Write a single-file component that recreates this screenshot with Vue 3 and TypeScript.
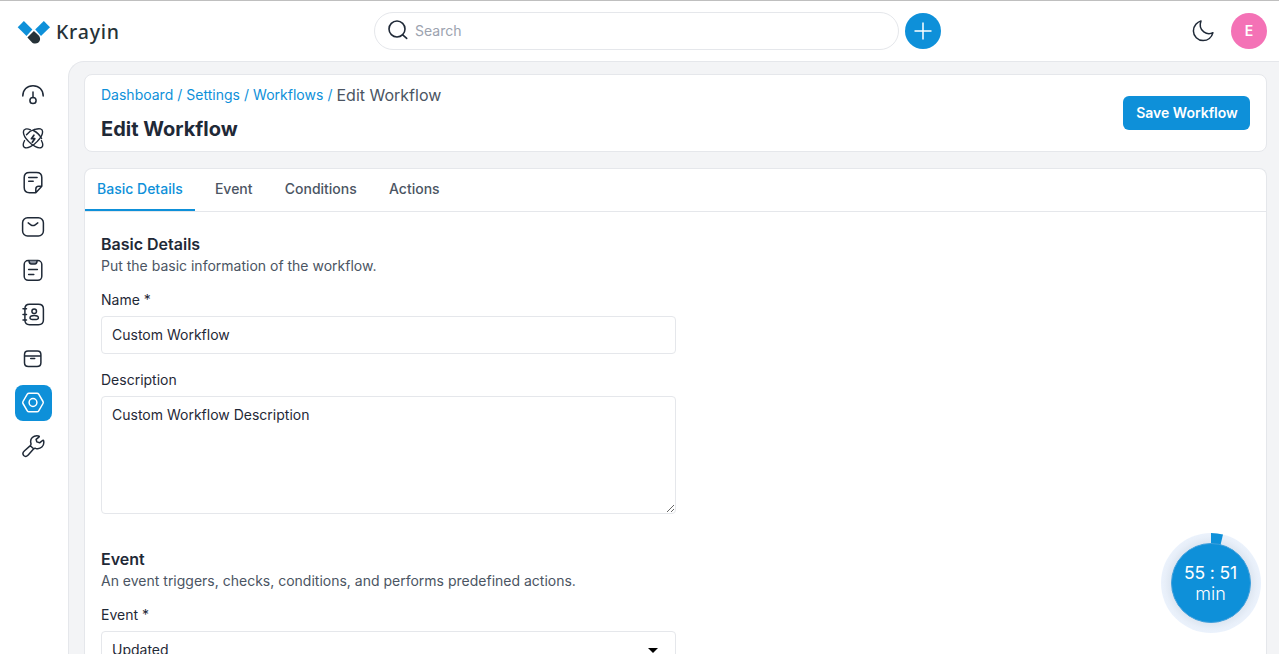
<script setup lang="ts">
import { ref } from 'vue'

interface Crumb { label: string }

const crumbs: Crumb[] = [{ label: 'Dashboard' }, { label: 'Settings' }, { label: 'Workflows' }]
const tabs: string[] = ['Basic Details', 'Event', 'Conditions', 'Actions']
const activeTab = ref<string>('Basic Details')
const name = ref<string>('Custom Workflow')
const description = ref<string>('Custom Workflow Description')
</script>

<template>
  <div class="app">
    <header class="header">
      <div class="brand">
        <svg class="logo" viewBox="0 0 110 34" width="110" height="34">
          <path d="M5.900 7 14.400 15.400 8.500 21.900-.3 13.200Z" fill="#0e90d9" />
          <path d="M25.800 7 32 13.200 23 21.900 17.200 15.400Z" fill="#0e90d9" />
          <path d="M15.900 17 21 21.700C23.300 24.500 22 29.500 17.300 29.500 15.500 29.500 14.500 29 13.600 28L9.400 23.400Z" fill="#263238" />
          <text x="38" y="25" textLength="63" lengthAdjust="spacing">Krayin</text>
        </svg>
      </div>
      <div class="search-row">
        <label class="search">
          <svg viewBox="0 0 24 24" width="24" height="24" class="line">
            <circle cx="11" cy="10" r="8" /><path d="m16.700 15.800 4 3.600" />
          </svg>
          <input type="text" placeholder="Search" />
        </label>
        <button class="add" aria-label="Add">
          <svg viewBox="0 0 36 36" width="36" height="36"><path d="M18 9.5v17M9.5 18h17" fill="none" stroke="#fff" stroke-width="1.5" /></svg>
        </button>
      </div>
      <div class="account">
        <svg class="line" viewBox="0 0 24 24" width="24" height="24">
          <path d="M10 1.900C6.500 3 2.400 6.600 2.400 12a9.700 9.700 0 0 0 9.700 9.600c4.800 0 8.600-3.300 9.800-7.900-2.200 1.100-6.200 1.300-9.100-.9-3.500-2.700-4.300-7-2.800-10.900Z" />
        </svg>
        <span class="avatar">E</span>
      </div>
    </header>

    <div class="body">
      <nav class="sidebar">
        <a><svg class="line" viewBox="0 0.500 24 24" width="24" height="24">
          <path d="M1.800 13.600C1.800 7 6 3.200 12 3.200s10.200 3.800 10.200 10.400" /><circle cx="12" cy="18" r="3.100" /><path d="M12 9.500V15" />
        </svg></a>
        <a><svg class="line" viewBox="0 0.500 24 24" width="24" height="24">
          <g stroke-width="1.400">
            <path d="M9.500 3.300C5.500 1.600 2.400 2.400 2.400 5.500c0 2.500 1.800 6 4.800 9.100 4.500 4.900 10.500 8 13.400 6.200 1.600-1.100 1.400-3.700-.2-6.800" />
            <path d="M14 2.900c4.500-1.400 7.600-.7 7.600 2.400 0 2.500-1.800 6-5 9.300-4.500 4.900-10.300 8-13.200 6.200C1.800 19.700 2 17.100 3.600 14" />
            <path d="M5.500 8.200C7.800 5.600 10.700 3.700 13.600 2.900M12.500 4c3 1.500 6.300 4.600 8.100 8" />
          </g>
          <path d="M8 10.500 12 6.800l4.200 4.300-4.200 5.200-4.200-4Z" fill="#fff" stroke="none" />
          <path d="m12.900 8.700-2.500 3.500h3.400l-2.500 3.600" stroke-width="1.700" />
        </svg></a>
        <a><svg class="line" viewBox="0 0.500 24 24" width="24" height="24">
          <path d="M14.800 22.200H8.500C5 22.200 3.200 20.500 3.200 17V7c0-3.600 1.700-5 5.300-5h7c3.600 0 5.300 1.500 5.300 5v8.800l-6 6.400v-3.500c0-2 .8-2.900 2.800-2.900h3.200M7.700 7h8.400M7.700 10.800h4.500" />
        </svg></a>
        <a><svg class="line" viewBox="0 0.300 24 24" width="24" height="24">
          <rect x="1.600" y="3" width="20.800" height="18.200" rx="5" /><path d="m7.200 8.200 2.600 1.900c1.400 1 3 1 4.400 0l2.600-1.900" />
        </svg></a>
        <a><svg class="line" viewBox="0 0.300 24 24" width="24" height="24">
          <rect x="3.200" y="1.800" width="17.600" height="19.800" rx="4" /><path d="M8 2c.1 2.600.8 3.200 2.400 3.200h3.400c1.500 0 2.200-.8 2.300-3.200" fill="#8b93a0" /><path d="M7.600 10.900h8.800M7.600 15.900h5.200" />
        </svg></a>
        <a><svg class="line" viewBox="0 0.500 24 24" width="24" height="24">
          <path d="M8.500 1.700h8.900c3.200 0 5 1.700 5 4.700v11.100c0 3-1.800 4.700-5 4.700H8.500c-3 0-4.600-1.600-4.600-4.700V6.400c0-3 1.600-4.700 4.600-4.700ZM2 6.300h3.500M2 11.900h3.500M2 17.600h3.500" /><circle cx="13.200" cy="8.800" r="2.300" /><path d="M13.200 13.100c-2.700 0-4.200 1-4.200 2.300s1 1.600 4.200 1.600 4.200-.4 4.200-1.600-1.500-2.300-4.200-2.300Z" />
        </svg></a>
        <a><svg class="line" viewBox="0.300 0.300 24 24" width="24" height="24">
          <path d="M7.300 4.400h9.400c2.400 0 3.500 1.300 3.500 3.700v8c0 2.600-1.200 3.800-3.900 3.800H7.700c-2.600 0-3.900-1.200-3.900-3.800v-8c0-2.400 1.200-3.700 3.500-3.700ZM3.900 9.200h16.200M10 11.800h4" />
        </svg></a>
        <a class="current"><svg class="line" viewBox="0 0.500 24 24" width="24" height="24">
          <path d="M8 2.700h8c.9 0 1.300.3 1.700 1l4.300 7.300c.4.700.4 1.300 0 2l-4.300 7.300c-.4.700-.8 1-1.700 1H8c-.9 0-1.300-.3-1.700-1L2 13c-.4-.7-.4-1.300 0-2l4.300-7.300c.4-.7.8-1 1.700-1Z" /><circle cx="12" cy="12" r="3.900" />
        </svg></a>
        <a><svg class="line wrench" viewBox="-0.500 0.300 24 24" width="24" height="24">
          <path d="M16.900 2.200c-5-.8-8.800 2.700-7.500 7.400.3 1 .2 1.500-.6 2.300l-6 5.400c-1.600 1.500-1.700 3.200-.6 4.500 1.300 1.300 3.100 1.200 4.500-.4l5.300-6c.8-.9 1.300-1 2.300-.7 4.800 1.200 8.700-2.300 7.900-7.400-.1-.9-.7-1-1.300-.4l-2.800 2.200-2.700-.9-.8-2.500 2.800-2.200c.7-.6.500-1.100-.5-1.300ZM8.800 12l3.300 3" />
        </svg></a>
      </nav>

      <main class="main">
        <section class="title-card">
          <div>
            <div class="crumbs">
              <span v-for="crumb in crumbs" :key="crumb.label" class="crumb"><a>{{ crumb.label }}</a><i>/</i></span>
              <span class="here">Edit Workflow</span>
            </div>
            <h1>Edit Workflow</h1>
          </div>
          <button class="save">Save Workflow</button>
        </section>

        <section class="form-card">
          <div class="tabs">
            <button v-for="tab in tabs" :key="tab" class="tab" :class="{ active: tab === activeTab }" @click="activeTab = tab">{{ tab }}</button>
          </div>
          <div class="form">
            <h2>Basic Details</h2>
            <p>Put the basic information of the workflow.</p>
            <label class="field">
              <span>Name *</span>
              <input v-model="name" type="text" />
            </label>
            <label class="field second">
              <span>Description</span>
              <textarea v-model="description" spellcheck="false"></textarea>
            </label>
            <h2 class="next">Event</h2>
            <p>An event triggers, checks, conditions, and performs predefined actions.</p>
            <div class="field">
              <span>Event *</span>
              <div class="select">Updated<svg viewBox="0 0 10 5" width="10" height="5"><path d="M0 0h10L5 5Z" /></svg></div>
            </div>
          </div>
        </section>
      </main>
    </div>

    <div class="timer">
      <svg viewBox="0 0 100 100" width="100" height="100">
        <defs>
          <radialGradient id="timer-halo">
            <stop offset=".78" stop-color="#dce5f0" />
            <stop offset=".92" stop-color="#e8eff9" />
            <stop offset="1" stop-color="#ebf2fc" />
          </radialGradient>
        </defs>
        <circle cx="50" cy="50" r="50" fill="url(#timer-halo)" />
        <path d="M50 0a50 50 0 0 1 12 1.500L59.500 12H50Z" fill="#0e90d9" />
        <circle cx="50" cy="50" r="39.500" fill="#0e90d9" stroke="#3f9fdc" stroke-width="1" />
      </svg>
      <div class="time"><b>55 : 51</b><span>min</span></div>
    </div>
  </div>
</template>

<style>
body { margin: 0; overflow: hidden; }
</style>

<style scoped>
* { box-sizing: border-box; }
.app { position: relative; display: flex; flex-direction: column; height: 654px; overflow: hidden; background: #fff; border-top: 1px solid #bfbfbf; color: #1f2937; font-family: Inter, sans-serif; font-size: 14px; line-height: 20px; }
button, input, textarea { font: inherit; color: inherit; }
button { border: 0; padding: 0; }
svg { display: block; flex: none; }
.line { fill: none; stroke: #1f2937; stroke-width: 1.5; stroke-linecap: round; stroke-linejoin: round; }
.header { display: flex; align-items: center; height: 60px; flex: none; padding: 0 12px 0 18px; }
.brand { width: 356px; }
.logo { overflow: visible; }
.logo text { font-family: "Noto Sans", sans-serif; font-size: 19.5px; font-weight: 500; fill: #263238; }
.search-row { display: flex; align-items: center; gap: 6px; }
.search { display: flex; align-items: center; width: 525px; height: 38px; border: 1px solid #e5e7eb; border-radius: 19px; padding-left: 11px; gap: 5px; }
.search .line { stroke-width: 1.6; }
.search input { width: 400px; border: 0; outline: 0; padding: 0; background: transparent; }
.search input::placeholder { color: #9ca3af; opacity: 1; }
.add { width: 36px; height: 36px; border-radius: 50%; background: #0e90d9; }
.account { display: flex; align-items: center; gap: 16px; margin-left: auto; }
.avatar { width: 36px; height: 36px; border-radius: 50%; background: #f472b6; color: #fff; font-weight: 600; line-height: 36px; text-align: center; }
.body { display: flex; flex: 1; min-height: 0; }
.sidebar { width: 68px; flex: none; padding: 16px 0 0 15px; display: flex; flex-direction: column; gap: 8px; }
.sidebar a { display: flex; align-items: center; width: 37px; height: 36px; flex: none; border-radius: 8px; padding-left: 6px; }
.sidebar .wrench { margin-top: -2px; }
.sidebar .current { background: #0e90d9; }
.sidebar .current .line { stroke: #fff; }
.main { flex: 1; min-width: 0; border: solid #e5e7eb; border-width: 1px 0 0 1px; border-top-left-radius: 16px; background: #f3f4f6; padding: 12px 12px 0 15px; }
.title-card { display: flex; align-items: center; justify-content: space-between; height: 78px; border: 1px solid #e5e7eb; border-radius: 8px; background: #fff; padding: 0 16px; }
.crumbs { display: flex; align-items: center; height: 24px; }
.crumb { color: #0e90d9; display: flex; }
.crumb i { font-style: normal; margin: 0 4px 0 4.1px; }
.here { color: #4b5563; font-size: 16px; line-height: 24px; }
h1 { margin: 8px 0 0; font-size: 20px; line-height: 28px; font-weight: 700; }
.save { width: 127px; height: 34px; padding-left: 1px; border-radius: 6px; background: #0e90d9; color: #fff; font-weight: 600; }
.form-card { margin-top: 16px; border: 1px solid #e5e7eb; border-radius: 8px 8px 0 0; border-bottom: 0; background: #fff; height: 600px; }
.tabs { display: flex; gap: 8.2px; height: 43px; border-bottom: 1px solid #e5e7eb; }
.tab { padding: 0 12px; background: transparent; color: #4b5563; font-weight: 500; border-bottom: 2px solid transparent; }
.tab.active { color: #0e90d9; border-color: #0e90d9; }
.form { width: 607px; padding: 20px 16px; }
h2 { margin: 0; font-size: 16px; line-height: 24px; font-weight: 600; }
.next { margin-top: 33px; }
p { margin: 0 0 14px; color: #4b5563; }
.field { display: flex; flex-direction: column; gap: 6px; }
.second { margin-top: 16px; }
.field input, .field textarea, .select { display: block; width: 575px; border: 1px solid #e5e7eb; border-radius: 4px; outline: 0; background: #fff; padding: 8px 10px; }
.field input { height: 38px; padding-bottom: 10px; }
.field textarea { height: 118px; resize: vertical; }
.select { display: flex; align-items: center; justify-content: space-between; height: 38px; padding-right: 17px; }
.timer { position: absolute; left: 1161px; top: 532px; width: 100px; height: 100px; }
.time { position: absolute; inset: 0 1px 0 0; display: flex; flex-direction: column; align-items: center; justify-content: center; color: #fff; font-size: 18px; line-height: 21px; }
.time b { font-weight: 400; font-size: 17.5px; letter-spacing: -0.1px; }
.time span { font-weight: 300; }
</style>
